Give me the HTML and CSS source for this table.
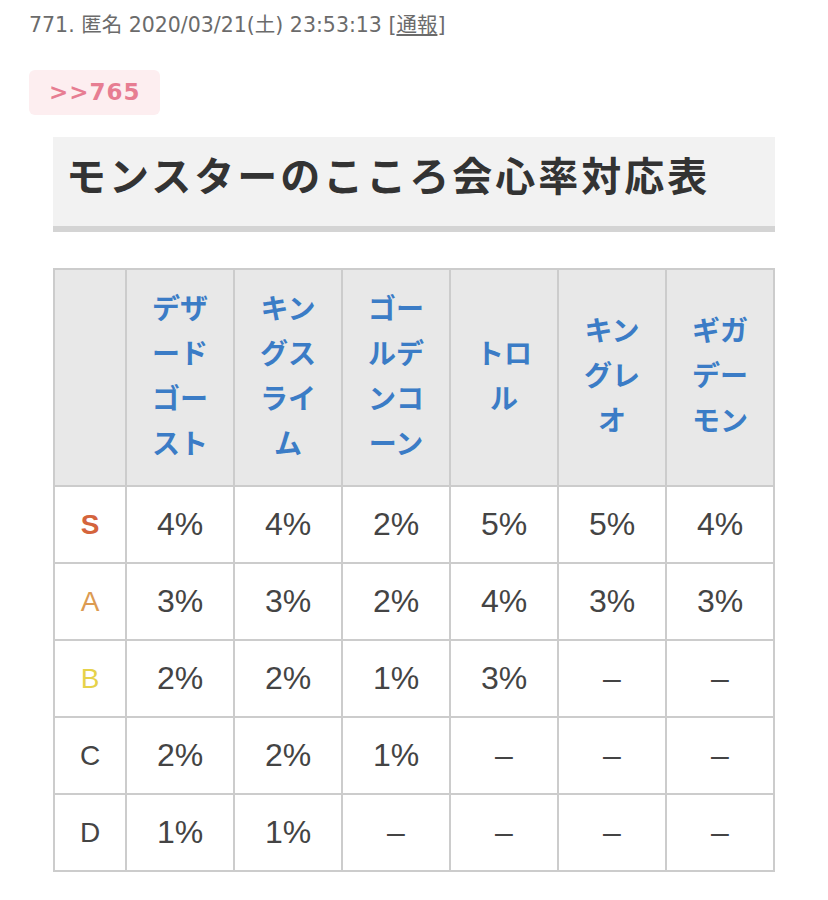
FILE: index.html
```html
<!DOCTYPE html>
<html lang="ja">
<head>
<meta charset="utf-8">
<link rel="stylesheet" href="styles.css">
</head>
<body>
<div class="page">
  <div class="meta">771. 匿名 2020/03/21(土) 23:53:13 [<span class="report">通報</span>]</div>
  <div class="anchor">&gt;&gt;765</div>
  <h2 class="title">モンスターのこころ会心率対応表</h2>
  <table class="rates">
    <thead>
      <tr>
        <th class="corner"></th>
        <th>デザードゴースト</th>
        <th>キングスライム</th>
        <th>ゴールデンコーン</th>
        <th>トロル</th>
        <th>キングレオ</th>
        <th>ギガデーモン</th>
      </tr>
    </thead>
    <tbody>
      <tr><td class="rank s">S</td><td>4%</td><td>4%</td><td>2%</td><td>5%</td><td>5%</td><td>4%</td></tr>
      <tr><td class="rank a">A</td><td>3%</td><td>3%</td><td>2%</td><td>4%</td><td>3%</td><td>3%</td></tr>
      <tr><td class="rank b">B</td><td>2%</td><td>2%</td><td>1%</td><td>3%</td><td>–</td><td>–</td></tr>
      <tr><td class="rank">C</td><td>2%</td><td>2%</td><td>1%</td><td>–</td><td>–</td><td>–</td></tr>
      <tr><td class="rank">D</td><td>1%</td><td>1%</td><td>–</td><td>–</td><td>–</td><td>–</td></tr>
    </tbody>
  </table>
</div>
</body>
</html>
```
FILE: styles.css
```css
html, body {
  margin: 0;
  padding: 0;
  background: #ffffff;
}
body {
  font-family: "Noto Sans CJK JP", "Noto Sans", sans-serif;
  color: #333;
}
.page {
  padding: 12px 0 0 0;
}
.meta {
  margin-left: 29px;
  font-family: "DejaVu Sans", "Noto Sans CJK JP", sans-serif;
  font-size: 20.5px;
  line-height: 26px;
  color: #6b6b6b;
}
.report {
  text-decoration: underline;
}
.anchor {
  margin: 32px 0 0 29px;
  width: 131px;
  height: 45px;
  box-sizing: border-box;
  padding-left: 20px;
  background: #fdeef0;
  border-radius: 6px;
  color: #e77d92;
  font-family: "DejaVu Sans", sans-serif;
  font-weight: bold;
  font-size: 23px;
  line-height: 45px;
  letter-spacing: 1px;
}
.title {
  margin: 22px 53px 0 53px;
  height: 95px;
  box-sizing: border-box;
  padding-left: 13px;
  background: #f2f2f2;
  border-bottom: 6px solid #d4d4d4;
  font-size: 40px;
  font-weight: bold;
  line-height: 74px;
  color: #333;
  letter-spacing: 3px;
}
.rates {
  margin: 36px 0 0 53px;
  width: 722px;
  border-collapse: collapse;
  table-layout: fixed;
  border: 2px solid #cccccc;
}
.rates th, .rates td {
  border: 2px solid #cccccc;
  text-align: center;
  vertical-align: middle;
  padding: 0;
}
.rates th {
  width: 108px;
  height: 217px;
  background: #e8e8e8;
  color: #3b7cc6;
  font-size: 28px;
  line-height: 45px;
  font-weight: bold;
  padding: 0 22px 6px 22px;
  box-sizing: border-box;
  word-break: break-all;
}
.rates th.corner {
  width: 72px;
  padding: 0;
}
.rates td {
  height: 75px;
  font-family: "Liberation Sans", "Noto Sans", sans-serif;
  font-size: 32px;
  color: #444;
  background: #fff;
}
.rates td.rank {
  font-size: 28px;
  color: #444;
}
.rates td.s {
  color: #d4643c;
  font-weight: bold;
}
.rates td.a {
  color: #dc9b52;
}
.rates td.b {
  color: #e6d24a;
}
```
